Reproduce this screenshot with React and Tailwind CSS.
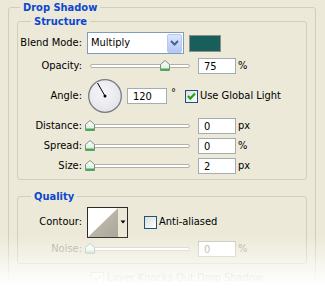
const Thumb = ({ disabled }) => (
  <svg width="10" height="11" viewBox="0 0 10 11" className="block">
    <defs>
      <linearGradient id={disabled ? "thd" : "th"} x1="0" y1="0" x2="0" y2="1">
        <stop offset="0" stopColor="#ffffff" />
        <stop offset="1" stopColor={disabled ? "#e4efe6" : "#d6ecd9"} />
      </linearGradient>
    </defs>
    <path
      d="M0.5 10.5 L0.5 4.5 L5 0.5 L9.5 4.5 L9.5 10.5 Z"
      fill={`url(#${disabled ? "thd" : "th"})`}
      stroke={disabled ? "#b9c4bb" : "#7d8f80"}
    />
    <path d="M1 9.5 L9 9.5" stroke={disabled ? "#b4dcb9" : "#3fae4f"} strokeWidth="2" />
  </svg>
);

const Slider = ({ value, disabled }) => (
  <div className="relative flex h-[14px] w-[108px] items-center">
    <div
      className={`ml-[4px] h-[4px] w-[100px] rounded-full border bg-white ${
        disabled ? "border-[#d3d1c7]" : "border-[#b3b1a6]"
      }`}
    />
    <div className="absolute top-[1px]" style={{ left: `${value - 1}px` }}>
      <Thumb disabled={disabled} />
    </div>
  </div>
);

const Field = ({ value, w = "w-[38px]", disabled }) => (
  <div
    className={`flex h-[16px] ${w} items-center border bg-white pl-[5px] leading-none ${
      disabled ? "border-[#c9c9c0] text-[#aca899]" : "border-[#a5acb2] text-black"
    }`}
  >
    {value}
  </div>
);

const Check = ({ checked, disabled }) => (
  <svg width="13" height="13" viewBox="0 0 13 13" className="block shrink-0">
    <defs>
      <linearGradient id={disabled ? "cbd" : "cb"} x1="0" y1="0" x2="1" y2="1">
        <stop offset="0" stopColor={disabled ? "#f4f3ee" : "#dcdcd7"} />
        <stop offset="1" stopColor="#ffffff" />
      </linearGradient>
    </defs>
    <rect
      x="0.5"
      y="0.5"
      width="12"
      height="12"
      fill={`url(#${disabled ? "cbd" : "cb"})`}
      stroke={disabled ? "#cac8bb" : "#1c5180"}
    />
    {checked && (
      <path
        d="M3 6 L5.3 8.6 L10 3.6"
        fill="none"
        stroke={disabled ? "#c4dcc6" : "#21a121"}
        strokeWidth="2.2"
      />
    )}
  </svg>
);

const Label = ({ children, disabled }) => (
  <div className={`w-[64px] shrink-0 text-right ${disabled ? "text-[#aca899]" : "text-black"}`}>
    {children}
  </div>
);

const Legend = ({ children, ml }) => (
  <legend className={`${ml} px-[3px] text-[11px] font-bold leading-[13px] text-[#0b47cf]`}>
    {children}
  </legend>
);

const SliderRow = ({ label, value, amount, unit }) => (
  <div className="flex h-[20px] items-center">
    <Label>{label}</Label>
    <div className="ml-[4px]">
      <Slider value={value} />
    </div>
    <div className="ml-[4px]">
      <Field value={amount} />
    </div>
    <span className="ml-[2px]">{unit}</span>
  </div>
);

export default function App() {
  return (
    <div className="relative h-[295px] w-[325px] overflow-hidden bg-[#ece9d8] pl-[8px] pt-[1px] font-['DejaVu_Sans_Condensed','Liberation_Sans',sans-serif] text-[11px] text-black">
      <fieldset className="w-[308px] rounded-[3px] border border-[#d0cebf] pb-[20px]">
        <Legend ml="ml-[11px]">Drop Shadow</Legend>

        <fieldset className="mx-[8px] mt-[1px] rounded-[3px] border border-[#d0cebf] pb-[3px]">
          <Legend ml="ml-[13px]">Structure</Legend>
          <div className="pt-[2px]">
            <div className="flex h-[26px] items-center">
              <Label>Blend Mode:</Label>
              <div className="ml-[5px] flex h-[22px] w-[97px] items-center border border-[#7f9db9] bg-white p-[1px]">
                <span className="flex-1 pl-[2px]">Multiply</span>
                <div className="flex h-[19px] w-[15px] items-center justify-center rounded-[2px] border border-[#b6c9f4] bg-linear-to-b from-[#dbe6fe] to-[#b2c6f6]">
                  <svg width="9" height="6" viewBox="0 0 9 6">
                    <path d="M1 1 L4.5 4.5 L8 1" fill="none" stroke="#4d6185" strokeWidth="2" />
                  </svg>
                </div>
              </div>
              <div className="ml-[5px] h-[17px] w-[32px] border border-[#8f8f8a] bg-[#175f5b]" />
            </div>

            <SliderRow label="Opacity:" value={75} amount="75" unit="%" />

            <div className="flex h-[40px] items-center">
              <Label>Angle:</Label>
              <svg width="36" height="36" viewBox="0 0 36 36" className="ml-[5px] block">
                <defs>
                  <radialGradient id="dial" cx="0.45" cy="0.4" r="0.6">
                    <stop offset="0" stopColor="#f7f7fa" />
                    <stop offset="1" stopColor="#e3e3ea" />
                  </radialGradient>
                </defs>
                <circle cx="18" cy="18" r="16.3" fill="url(#dial)" stroke="#7a7b82" strokeWidth="1.3" />
                <path d="M18 18 L10.5 5" stroke="#000" strokeWidth="1" />
                <circle cx="18" cy="18" r="1.5" fill="#000" />
              </svg>
              <div className="ml-[4px]">
                <Field value="120" w="w-[40px]" />
              </div>
              <span className="ml-[4px] self-start pt-[9px]">°</span>
              <div className="ml-[9px]">
                <Check checked />
              </div>
              <span className="ml-[2px]">Use Global Light</span>
            </div>

            <SliderRow label="Distance:" value={0} amount="0" unit="px" />
            <SliderRow label="Spread:" value={0} amount="0" unit="%" />
            <SliderRow label="Size:" value={0} amount="2" unit="px" />
          </div>
        </fieldset>

        <fieldset className="mx-[8px] mt-[10px] rounded-[3px] border border-[#d0cebf] pb-[4px]">
          <Legend ml="ml-[13px]">Quality</Legend>
          <div className="flex h-[36px] items-center pt-[2px]">
            <Label>Contour:</Label>
            <svg width="41" height="31" viewBox="0 0 41 31" className="ml-[5px] block">
              <defs>
                <linearGradient id="ct" x1="0" y1="0" x2="1" y2="1">
                  <stop offset="0" stopColor="#c9c6b9" />
                  <stop offset="1" stopColor="#a9a698" />
                </linearGradient>
              </defs>
              <rect x="0.5" y="0.5" width="40" height="30" fill="#ece9d8" stroke="#2b2b2b" />
              <rect x="1" y="1" width="30" height="29" fill="#ffffff" />
              <path d="M1 30 L31 1 L31 30 Z" fill="url(#ct)" />
              <path d="M33.5 13.5 L38.5 13.5 L36 16.5 Z" fill="#000" />
            </svg>
            <div className="ml-[16px]">
              <Check />
            </div>
            <span className="ml-[2px]">Anti-aliased</span>
          </div>
          <div className="flex h-[20px] items-center">
            <Label disabled>Noise:</Label>
            <div className="ml-[4px]">
              <Slider value={0} disabled />
            </div>
            <div className="ml-[4px]">
              <Field value="0" disabled />
            </div>
            <span className="ml-[2px] text-[#aca899]">%</span>
          </div>
        </fieldset>

        <div className="mt-[4px] flex h-[20px] items-center pl-[82px] text-[#aca899]">
          <Check checked disabled />
          <span className="ml-[3px]">Layer Knocks Out Drop Shadow</span>
        </div>
      </fieldset>

      <div className="pointer-events-none absolute inset-x-0 bottom-0 h-[60px] bg-linear-to-b from-[#ffffff00] via-[#ffffff99] via-50% to-white to-85%" />
    </div>
  );
}
